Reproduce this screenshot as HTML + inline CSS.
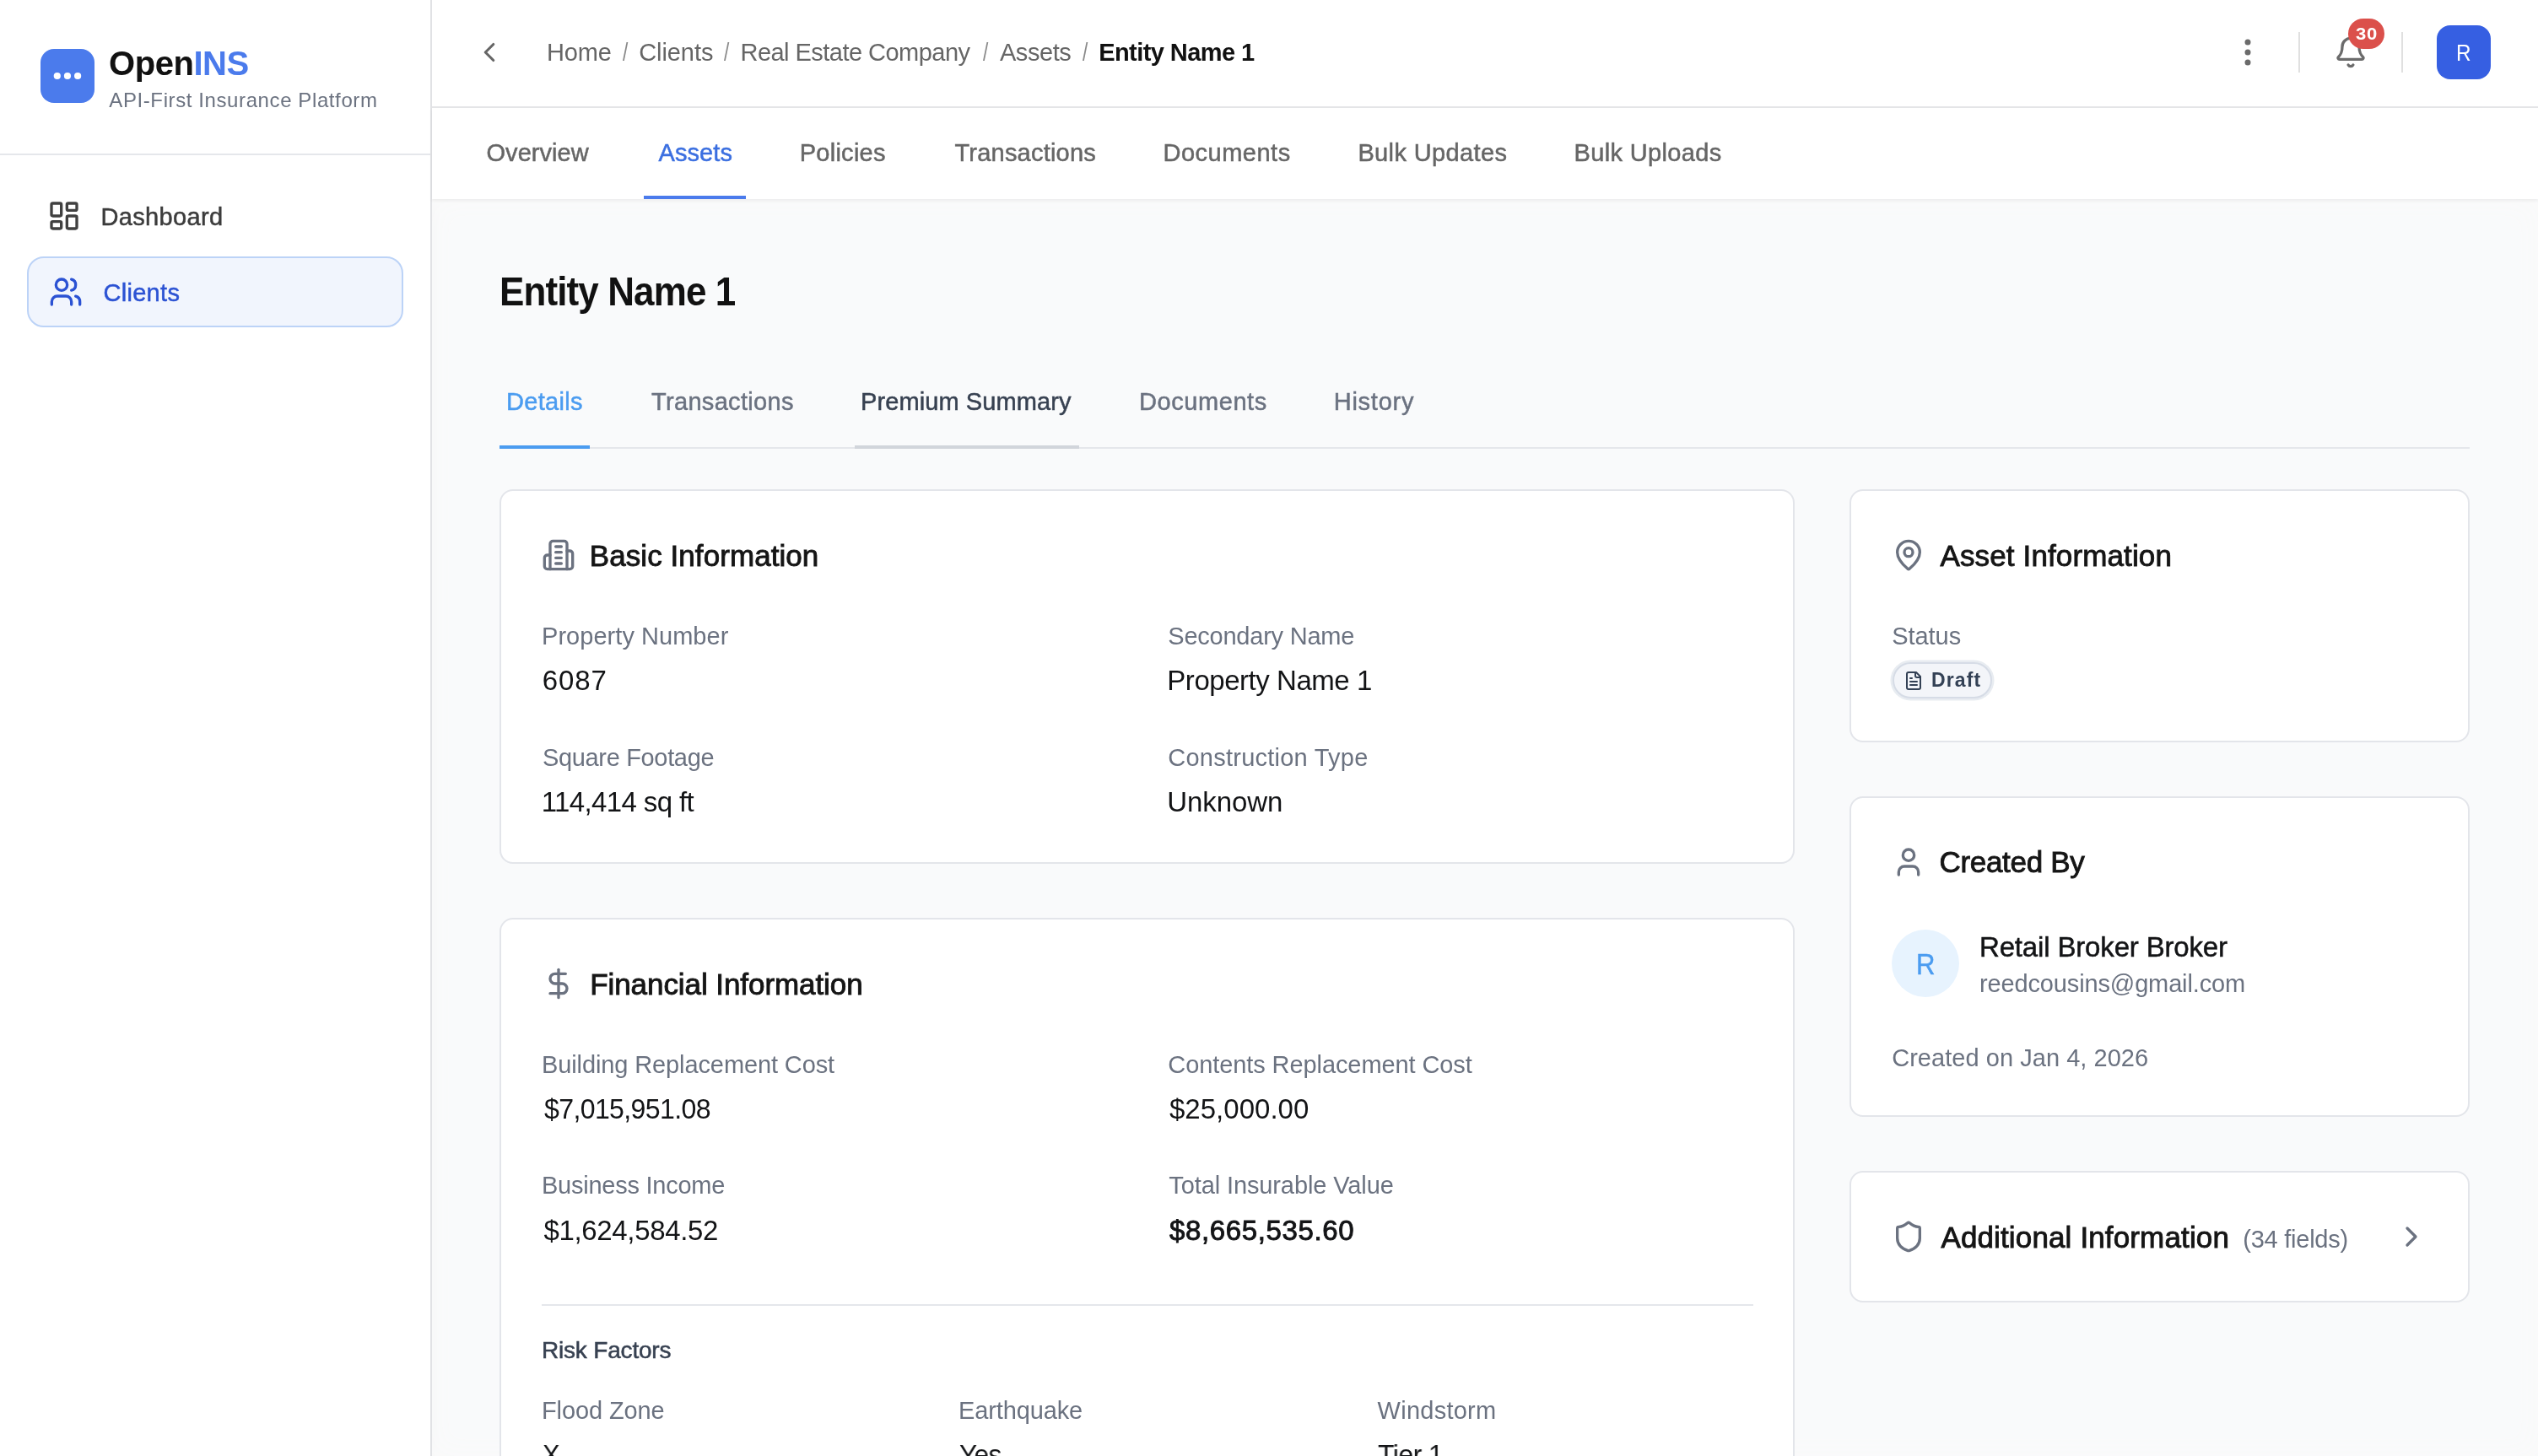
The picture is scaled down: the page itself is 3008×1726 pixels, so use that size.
<!DOCTYPE html>
<html lang="en">
<head>
<meta charset="utf-8">
<title>Entity Name 1 - OpenINS</title>
<style>
*{box-sizing:border-box;margin:0;padding:0}
html,body{width:3008px;height:1726px;overflow:hidden;background:#f9fafb}
body{font-family:"Liberation Sans",Arial,sans-serif;color:#111827;position:relative}
.abs{position:absolute;white-space:nowrap}
#txt{position:absolute;left:0;top:0;width:3008px;height:1726px;will-change:transform}
svg{display:block;overflow:visible}
.ic{fill:none;stroke:currentColor;stroke-width:2;stroke-linecap:round;stroke-linejoin:round}
.med{-webkit-text-stroke:.5px currentColor}
.ttl{-webkit-text-stroke:.9px currentColor}
.sb{-webkit-text-stroke:.9px currentColor}

@media (max-width:1600px){html{zoom:.5}}

/* sidebar */
#sidebar{position:absolute;left:0;top:0;width:512px;height:1726px;background:#fff;border-right:2px solid #e1e2e5}
#sidehead{position:absolute;left:0;top:0;width:510px;height:184px;border-bottom:2px solid #e5e7eb}
#logo{position:absolute;left:48px;top:58px;width:64px;height:64px;border-radius:16px;background:#4b7bec}
.navicon{position:absolute;width:40px;height:40px}
#navon{position:absolute;left:32px;top:304px;width:446px;height:84px;border-radius:20px;background:#f1f5fd;border:2px solid #bcd3f7}

/* topbar */
#topbar{position:absolute;left:512px;top:0;width:2496px;height:128px;background:#fff;border-bottom:2px solid #e5e6e8}
.vdiv{position:absolute;top:38px;width:2px;height:48px;background:#e0e0e0}
#avatar{position:absolute;left:2888px;top:30px;width:64px;height:64px;border-radius:16px;background:#365fe2}
#badge{position:absolute;left:2783px;top:22px;width:43px;height:36px;border-radius:18px;background:#db504b}

#mainbg{position:absolute;left:512px;top:236px;width:2496px;height:1490px;background:#f9fafb;box-shadow:inset 0 0 28px 6px #fafafa,inset 10px 0 10px -8px rgba(0,0,0,.035)}

/* tab bar */
#tabbar{position:absolute;left:512px;top:128px;width:2496px;height:108px;background:#fff;box-shadow:0 2px 4px rgba(0,0,0,.06)}
#tabline{position:absolute;left:763px;top:232px;width:121px;height:4px;background:#4b7bec}

/* content */
.card{position:absolute;background:#fff;border:2px solid #e3e5ea;border-radius:16px}
.hicon{position:absolute;width:40px;height:40px;color:#6b7280}
.hr{position:absolute;height:2px;background:#e5e7eb}
</style>
</head>
<body>

<!-- ============ sidebar ============ -->
<div id="sidebar">
  <div id="sidehead">
    <div id="logo"><svg width="64" height="64" viewBox="0 0 64 64" fill="#fff"><circle cx="19.800" cy="32" r="4.100"/><circle cx="31.950" cy="32" r="4.100"/><circle cx="44.100" cy="32" r="4.100"/></svg></div>
  </div>
  <div id="navon"></div>
  <svg class="ic navicon" style="left:56px;top:236px;color:#404040" viewBox="0 0 24 24"><rect width="7" height="9" x="3" y="3" rx="1"/><rect width="7" height="5" x="14" y="3" rx="1"/><rect width="7" height="9" x="14" y="12" rx="1"/><rect width="7" height="5" x="3" y="16" rx="1"/></svg>
  <svg class="ic navicon" style="left:58px;top:326px;color:#2b52d3" viewBox="0 0 24 24"><path d="M16 21v-2a4 4 0 0 0-4-4H6a4 4 0 0 0-4 4v2"/><circle cx="9" cy="7" r="4"/><path d="M22 21v-2a4 4 0 0 0-3-3.87"/><path d="M16 3.13a4 4 0 0 1 0 7.75"/></svg>
</div>

<div id="mainbg"></div>

<!-- ============ top bar ============ -->
<div id="topbar"></div>
<svg class="ic abs" style="left:561px;top:43px;width:38px;height:38px;color:#666" viewBox="0 0 24 24"><path d="m15 18-6-6 6-6"/></svg>
<svg class="abs" style="left:2644px;top:42px;width:40px;height:40px" viewBox="0 0 24 24" fill="#6b6b6b"><circle cx="12" cy="4.800" r="2.100"/><circle cx="12" cy="12" r="2.100"/><circle cx="12" cy="19.200" r="2.100"/></svg>
<div class="vdiv" style="left:2724px"></div>
<svg class="ic abs" style="left:2766px;top:42px;width:40px;height:40px;color:#6b6b6b" viewBox="0 0 24 24"><path d="M10.268 21a2 2 0 0 0 3.464 0"/><path d="M3.262 15.326A1 1 0 0 0 4 17h16a1 1 0 0 0 .74-1.673C19.41 13.956 18 12.499 18 8A6 6 0 0 0 6 8c0 4.499-1.411 5.956-2.738 7.326"/></svg>
<div id="badge"></div>
<div class="vdiv" style="left:2846px"></div>
<div id="avatar"></div>

<!-- ============ tab bar ============ -->
<div id="tabbar"></div>
<div id="tabline"></div>

<!--MAIN-->
<!-- inner tab rules -->
<div class="hr" style="left:592px;top:530px;width:2335px"></div>
<div class="hr" style="left:592px;top:528px;width:107px;height:4px;background:#4b9cf0"></div>
<div class="hr" style="left:1013px;top:528px;width:266px;height:4px;background:#d1d5db"></div>

<!-- cards -->
<div class="card" style="left:592px;top:580px;width:1535px;height:444px"></div>
<div class="card" style="left:592px;top:1088px;width:1535px;height:700px"></div>
<div class="card" style="left:2192px;top:580px;width:735px;height:300px"></div>
<div class="card" style="left:2192px;top:944px;width:735px;height:380px"></div>
<div class="card" style="left:2192px;top:1388px;width:735px;height:156px"></div>

<!-- header icons -->
<svg class="ic hicon" style="left:642px;top:638px" viewBox="0 0 24 24"><path d="M6 22V4a2 2 0 0 1 2-2h8a2 2 0 0 1 2 2v18Z"/><path d="M6 12H4a2 2 0 0 0-2 2v6a2 2 0 0 0 2 2h2"/><path d="M18 9h2a2 2 0 0 1 2 2v9a2 2 0 0 1-2 2h-2"/><path d="M10 6h4"/><path d="M10 10h4"/><path d="M10 14h4"/><path d="M10 18h4"/></svg>
<svg class="ic hicon" style="left:642px;top:1146px" viewBox="0 0 24 24"><line x1="12" x2="12" y1="2" y2="22"/><path d="M17 5H9.5a3.5 3.5 0 0 0 0 7h5a3.5 3.5 0 0 1 0 7H6"/></svg>
<svg class="ic hicon" style="left:2242px;top:638px" viewBox="0 0 24 24"><path d="M20 10c0 4.993-5.539 10.193-7.399 11.799a1 1 0 0 1-1.202 0C9.539 20.193 4 14.993 4 10a8 8 0 0 1 16 0"/><circle cx="12" cy="10" r="3"/></svg>
<svg class="ic hicon" style="left:2242px;top:1002px" viewBox="0 0 24 24"><path d="M19 21v-2a4 4 0 0 0-4-4H9a4 4 0 0 0-4 4v2"/><circle cx="12" cy="7" r="4"/></svg>
<svg class="ic hicon" style="left:2242px;top:1446px" viewBox="0 0 24 24"><path d="M20 13c0 5-3.500 7.500-7.660 8.950a1 1 0 0 1-.670-.010C7.500 20.500 4 18 4 13V6a1 1 0 0 1 1-1c2 0 4.500-1.200 6.240-2.720a1.170 1.170 0 0 1 1.520 0C14.510 3.810 17 5 19 5a1 1 0 0 1 1 1z"/></svg>
<svg class="ic hicon" style="left:2838px;top:1446px" viewBox="0 0 24 24"><path d="m9 18 6-6-6-6"/></svg>

<!-- financial divider -->
<div class="hr" style="left:642px;top:1546px;width:1436px"></div>

<!-- status badge -->
<div style="position:absolute;left:2243px;top:784.5px;width:118px;height:43px;border-radius:22px;background:#f3f5f9;border:2px solid #d6dce6;box-shadow:0 0 0 2.5px rgba(203,213,225,.45)"></div>
<svg class="ic abs" style="left:2256px;top:794.5px;width:24px;height:24px;color:#334155" viewBox="0 0 24 24"><path d="M15 2H6a2 2 0 0 0-2 2v16a2 2 0 0 0 2 2h12a2 2 0 0 0 2-2V7Z"/><path d="M14 2v4a2 2 0 0 0 2 2h4"/><path d="M10 9H8"/><path d="M16 13H8"/><path d="M16 17H8"/></svg>

<!-- creator avatar -->
<div style="position:absolute;left:2242px;top:1102px;width:80px;height:80px;border-radius:50%;background:#e7f3fe"></div>
<div id="txt">
<div class="abs" style="left:129.0px;top:49px;font-size:40px;line-height:52px;color:#111;letter-spacing:-0.45px;font-weight:700">Open<span style="color:#4b7bec">INS</span></div>
<div class="abs" style="left:129.3px;top:103px;font-size:24px;line-height:32px;color:#6b7280;letter-spacing:0.60px">API-First Insurance Platform</div>
<div class="abs med" style="left:119.4px;top:237px;font-size:29px;line-height:40px;color:#3c3c3c;letter-spacing:0.36px">Dashboard</div>
<div class="abs med" style="left:122.4px;top:327px;font-size:29px;line-height:40px;color:#2b52d3;letter-spacing:0.31px">Clients</div>
<div class="abs" style="left:648.0px;top:42px;font-size:29px;line-height:40px;color:#666;letter-spacing:-0.16px">Home</div>
<div class="abs" style="left:737.5px;top:42px;font-size:29px;line-height:40px;color:#8a8a8a;transform:scaleX(0.7778);transform-origin:0 50%">/</div>
<div class="abs" style="left:757.2px;top:42px;font-size:29px;line-height:40px;color:#666;letter-spacing:-0.07px">Clients</div>
<div class="abs" style="left:858.0px;top:42px;font-size:29px;line-height:40px;color:#8a8a8a;transform:scaleX(0.7778);transform-origin:0 50%">/</div>
<div class="abs" style="left:877.5px;top:42px;font-size:29px;line-height:40px;color:#666;letter-spacing:-0.53px">Real Estate Company</div>
<div class="abs" style="left:1164.5px;top:42px;font-size:29px;line-height:40px;color:#8a8a8a;transform:scaleX(0.7778);transform-origin:0 50%">/</div>
<div class="abs" style="left:1184.9px;top:42px;font-size:29px;line-height:40px;color:#666;letter-spacing:-0.41px">Assets</div>
<div class="abs" style="left:1283.2px;top:42px;font-size:29px;line-height:40px;color:#8a8a8a;transform:scaleX(0.7778);transform-origin:0 50%">/</div>
<div class="abs" style="left:1302.2px;top:42px;font-size:29px;line-height:40px;color:#111;letter-spacing:-0.57px;font-weight:700">Entity Name 1</div>
<div class="abs" style="left:2910.9px;top:43px;font-size:27px;line-height:40px;color:#fff;transform:scaleX(0.9000);transform-origin:0 50%">R</div>
<div class="abs" style="left:2791.8px;top:28px;font-size:20px;line-height:24px;color:#fff;letter-spacing:0.60px;font-weight:700;transform:scaleX(1.1046);transform-origin:0 50%">30</div>
<div class="abs med" style="left:576.5px;top:161px;font-size:29px;line-height:40px;color:#666;letter-spacing:0.05px">Overview</div>
<div class="abs med" style="left:780.5px;top:161px;font-size:29px;line-height:40px;color:#3b6fe0;letter-spacing:0.09px">Assets</div>
<div class="abs med" style="left:947.7px;top:161px;font-size:29px;line-height:40px;color:#666;letter-spacing:0.27px">Policies</div>
<div class="abs med" style="left:1131.5px;top:161px;font-size:29px;line-height:40px;color:#666;letter-spacing:0.21px">Transactions</div>
<div class="abs med" style="left:1378.5px;top:161px;font-size:29px;line-height:40px;color:#666;letter-spacing:0.50px">Documents</div>
<div class="abs med" style="left:1609.4px;top:161px;font-size:29px;line-height:40px;color:#666;letter-spacing:0.38px">Bulk Updates</div>
<div class="abs med" style="left:1865.5px;top:161px;font-size:29px;line-height:40px;color:#666;letter-spacing:0.35px">Bulk Uploads</div>
<div class="abs" style="left:591.8px;top:313px;font-size:49px;line-height:64px;color:#111;letter-spacing:-0.98px;font-weight:700;transform:scaleX(0.8976);transform-origin:0 50%">Entity Name 1</div>
<div class="abs med" style="left:600.0px;top:456px;font-size:29px;line-height:40px;color:#4b9cf0;letter-spacing:0.31px">Details</div>
<div class="abs med" style="left:772.0px;top:456px;font-size:29px;line-height:40px;color:#6b7280;letter-spacing:0.32px">Transactions</div>
<div class="abs med" style="left:1020.0px;top:456px;font-size:29px;line-height:40px;color:#374151;letter-spacing:0.10px">Premium Summary</div>
<div class="abs med" style="left:1350.0px;top:456px;font-size:29px;line-height:40px;color:#6b7280;letter-spacing:0.57px">Documents</div>
<div class="abs med" style="left:1580.7px;top:456px;font-size:29px;line-height:40px;color:#6b7280;letter-spacing:0.76px">History</div>
<div class="abs ttl" style="left:698.8px;top:631px;font-size:35px;line-height:56px;color:#151515;letter-spacing:0.07px">Basic Information</div>
<div class="abs ttl" style="left:699.2px;top:1139px;font-size:35px;line-height:56px;color:#151515;letter-spacing:-0.07px">Financial Information</div>
<div class="abs ttl" style="left:2299.5px;top:631px;font-size:35px;line-height:56px;color:#151515;letter-spacing:0.13px">Asset Information</div>
<div class="abs ttl" style="left:2298.5px;top:994px;font-size:35px;line-height:56px;color:#151515;letter-spacing:-0.32px">Created By</div>
<div class="abs ttl" style="left:2300.4px;top:1439px;font-size:35px;line-height:56px;color:#151515;letter-spacing:0.14px">Additional Information</div>
<div class="abs" style="left:642.0px;top:734px;font-size:29px;line-height:40px;color:#6b7280;letter-spacing:0.04px">Property Number</div>
<div class="abs" style="left:1384.3px;top:734px;font-size:29px;line-height:40px;color:#6b7280;letter-spacing:-0.23px">Secondary Name</div>
<div class="abs" style="left:643.0px;top:878px;font-size:29px;line-height:40px;color:#6b7280;letter-spacing:-0.34px">Square Footage</div>
<div class="abs" style="left:1384.3px;top:878px;font-size:29px;line-height:40px;color:#6b7280;letter-spacing:0.24px">Construction Type</div>
<div class="abs" style="left:642.0px;top:1242px;font-size:29px;line-height:40px;color:#6b7280;letter-spacing:-0.11px">Building Replacement Cost</div>
<div class="abs" style="left:1384.3px;top:1242px;font-size:29px;line-height:40px;color:#6b7280;letter-spacing:-0.09px">Contents Replacement Cost</div>
<div class="abs" style="left:642.0px;top:1385px;font-size:29px;line-height:40px;color:#6b7280;letter-spacing:-0.25px">Business Income</div>
<div class="abs" style="left:1385.3px;top:1385px;font-size:29px;line-height:40px;color:#6b7280;letter-spacing:-0.11px">Total Insurable Value</div>
<div class="abs" style="left:642.0px;top:1652px;font-size:29px;line-height:40px;color:#6b7280;letter-spacing:-0.12px">Flood Zone</div>
<div class="abs" style="left:1136.0px;top:1652px;font-size:29px;line-height:40px;color:#6b7280;letter-spacing:-0.13px">Earthquake</div>
<div class="abs" style="left:1632.6px;top:1652px;font-size:29px;line-height:40px;color:#6b7280;letter-spacing:0.25px">Windstorm</div>
<div class="abs" style="left:2242.2px;top:734px;font-size:29px;line-height:40px;color:#6b7280;letter-spacing:-0.04px">Status</div>
<div class="abs" style="left:2346.0px;top:1146px;font-size:29px;line-height:40px;color:#6b7280;letter-spacing:-0.14px">reedcousins@gmail.com</div>
<div class="abs" style="left:2242.2px;top:1234px;font-size:29px;line-height:40px;color:#6b7280;letter-spacing:0.04px">Created on Jan 4, 2026</div>
<div class="abs" style="left:2658.3px;top:1449px;font-size:29px;line-height:40px;color:#6b7280;letter-spacing:-0.25px">(34 fields)</div>
<div class="abs" style="left:642.8px;top:783px;font-size:33px;line-height:48px;color:#131416;letter-spacing:0.90px">6087</div>
<div class="abs" style="left:1383.3px;top:783px;font-size:33px;line-height:48px;color:#131416;letter-spacing:-0.46px">Property Name 1</div>
<div class="abs" style="left:641.8px;top:927px;font-size:33px;line-height:48px;color:#131416;letter-spacing:-0.62px">114,414 sq ft</div>
<div class="abs" style="left:1383.3px;top:927px;font-size:33px;line-height:48px;color:#131416;letter-spacing:-0.09px">Unknown</div>
<div class="abs" style="left:644.5px;top:1291px;font-size:33px;line-height:48px;color:#131416;letter-spacing:-0.66px;transform:scaleX(0.9727);transform-origin:0 50%">$7,015,951.08</div>
<div class="abs" style="left:1386.0px;top:1291px;font-size:33px;line-height:48px;color:#131416;letter-spacing:0.02px">$25,000.00</div>
<div class="abs" style="left:644.5px;top:1435px;font-size:33px;line-height:48px;color:#131416;letter-spacing:-0.35px">$1,624,584.52</div>
<div class="abs sb" style="left:1386.0px;top:1435px;font-size:33px;line-height:48px;color:#131416;letter-spacing:0.63px">$8,665,535.60</div>
<div class="abs" style="left:642.5px;top:1701px;font-size:33px;line-height:48px;color:#131416;transform:scaleX(0.9318);transform-origin:0 50%">X</div>
<div class="abs" style="left:1137.0px;top:1701px;font-size:33px;line-height:48px;color:#131416;letter-spacing:-0.66px;transform:scaleX(0.9574);transform-origin:0 50%">Yes</div>
<div class="abs" style="left:1632.6px;top:1701px;font-size:33px;line-height:48px;color:#131416;letter-spacing:-0.66px;transform:scaleX(0.9736);transform-origin:0 50%">Tier 1</div>
<div class="abs med" style="left:2346.0px;top:1099px;font-size:33px;line-height:48px;color:#131416;letter-spacing:-0.16px">Retail Broker Broker</div>
<div class="abs med" style="left:642.0px;top:1581px;font-size:28px;line-height:40px;color:#374151;letter-spacing:-0.19px">Risk Factors</div>
<div class="abs med" style="left:2271.2px;top:1119px;font-size:35px;line-height:48px;color:#4b9cf0;transform:scaleX(0.8864);transform-origin:0 50%">R</div>
<div class="abs" style="left:2289.0px;top:790px;font-size:23px;line-height:32px;color:#334155;letter-spacing:1.12px;font-weight:700">Draft</div>
</div>
<!--/MAIN-->

</body>
</html>
